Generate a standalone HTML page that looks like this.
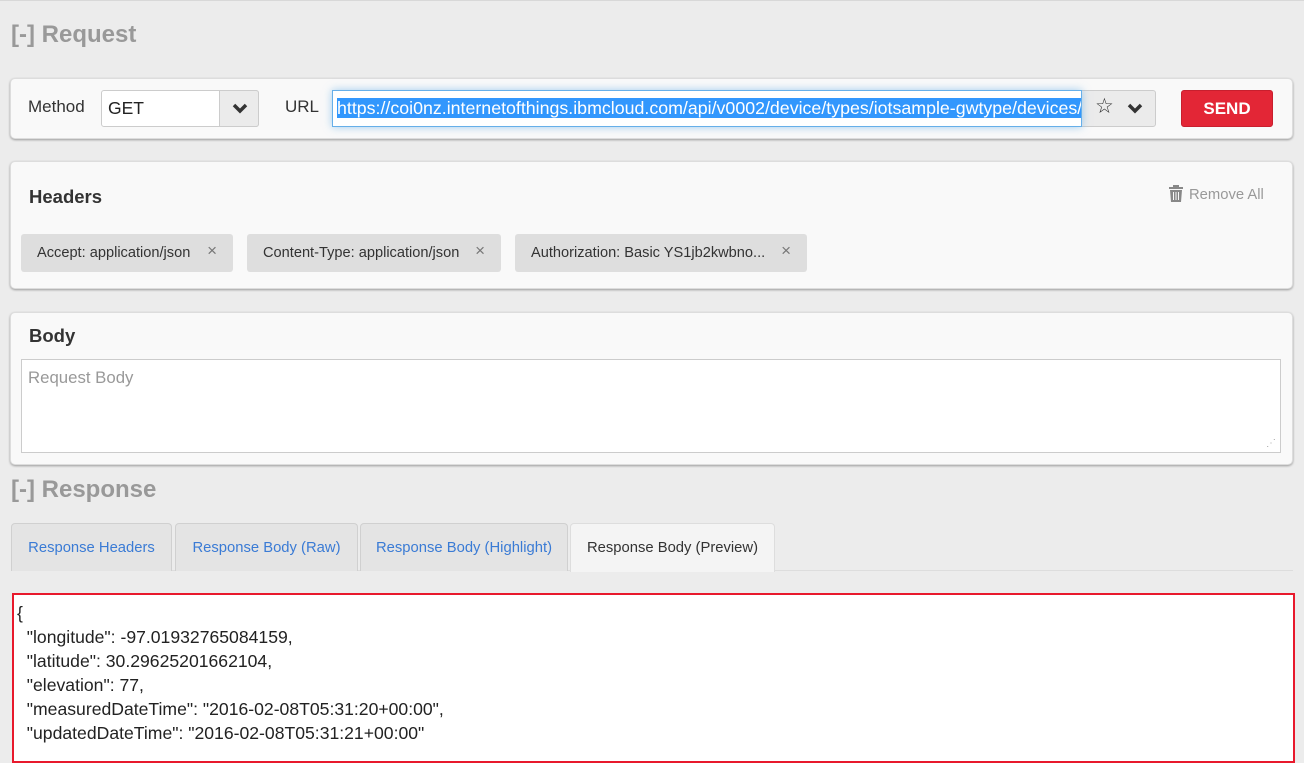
<!DOCTYPE html>
<html><head><style>
*{box-sizing:border-box;margin:0;padding:0}
body{width:1304px;height:750px;background:#ececec;font-family:"Liberation Sans",Arial,sans-serif;position:relative;overflow:hidden;border-top:1px solid #d8d8d8}
.a{position:absolute}
.panel{position:absolute;left:10px;width:1283px;background:#f9f9f9;border-radius:5px;box-shadow:0 1px 2px rgba(0,0,0,.35);border:1px solid #ddd}
.h2{font-size:24px;font-weight:bold;color:#999}
.lbl{font-size:17px;color:#333}
.chip{position:absolute;top:233px;height:38px;background:#dedede;border-radius:3px;font-size:14.6px;color:#333;line-height:38px;padding-left:16px}
.chip .x{position:absolute;right:16px;top:-2px;color:#777;font-size:17px}
.tab{position:absolute;top:522px;height:48px;background:#e4e4e4;border:1px solid #d0d0d0;border-bottom:none;border-radius:4px 4px 0 0;font-size:14.8px;color:#3a7bd5;line-height:48px;text-align:center}
.json{font-size:17.6px;color:#222;line-height:24px}
</style></head><body>
<div class="a h2" style="left:11px;top:20px">[-] Request</div>

<div class="panel" style="top:77px;height:61px"></div>
<div class="a lbl" style="left:28px;top:96px">Method</div>
<div class="a" style="left:101px;top:89px;width:158px;height:37px;border:1px solid #ccc;border-radius:3px;background:#fff"></div>
<div class="a" style="left:219px;top:89px;width:40px;height:37px;border:1px solid #ccc;border-radius:0 3px 3px 0;background:#ebebeb"></div>
<svg class="a" style="left:232px;top:101px" width="16" height="12" viewBox="0 0 16 12"><path d="M2 3 L8 9 L14 3" stroke="#333" stroke-width="3.5" fill="none"/></svg>
<div class="a" style="left:108px;top:97px;font-size:17.5px;color:#222">GET</div>
<div class="a lbl" style="left:285px;top:96px">URL</div>
<div class="a" style="left:1078px;top:89px;width:78px;height:37px;border:1px solid #ccc;border-radius:0 3px 3px 0;background:#ebebeb"></div>
<div class="a" style="left:1095px;top:93px;font-size:21px;color:#333;font-family:'DejaVu Sans',sans-serif">☆</div>
<svg class="a" style="left:1127px;top:101px" width="16" height="12" viewBox="0 0 16 12"><path d="M2 3 L8 9 L14 3" stroke="#333" stroke-width="3.5" fill="none"/></svg>
<div class="a" style="left:332px;top:89px;width:750px;height:37px;border:1px solid #66afe9;background:#fff;box-shadow:0 0 8px rgba(102,175,233,.6);overflow:hidden;white-space:nowrap;padding:7px 0 0 4px"><span style="background:#3297fd;color:#fff;font-size:17.8px">https://coi0nz.internetofthings.ibmcloud.com/api/v0002/device/types/iotsample-gwtype/devices/</span></div>
<div class="a" style="left:1181px;top:89px;width:92px;height:37px;background:#e32636;border:1px solid #c81f2e;border-radius:3px;color:#fff;font-weight:bold;font-size:17px;text-align:center;line-height:35px">SEND</div>

<div class="panel" style="top:160px;height:128px"></div>
<div class="a" style="left:29px;top:185px;font-size:18.5px;font-weight:bold;color:#333">Headers</div>
<svg class="a" style="left:1169px;top:184px" width="14" height="17" viewBox="0 0 14 17"><rect x="0" y="2" width="14" height="2" fill="#888"/><rect x="4" y="0" width="6" height="3" fill="#888"/><path d="M1 5h12l-1 12H2z" fill="#888"/><path d="M4.5 7v8M7 7v8M9.5 7v8" stroke="#f9f9f9" stroke-width="1"/></svg>
<div class="a" style="left:1189px;top:186px;font-size:14.8px;color:#999">Remove All</div>
<div class="chip" style="left:21px;width:212px">Accept: application/json<span class="x">×</span></div>
<div class="chip" style="left:247px;width:254px">Content-Type: application/json<span class="x">×</span></div>
<div class="chip" style="left:515px;width:292px">Authorization: Basic YS1jb2kwbno...<span class="x">×</span></div>

<div class="panel" style="top:311px;height:153px"></div>
<div class="a" style="left:29px;top:324px;font-size:18.5px;font-weight:bold;color:#333">Body</div>
<div class="a" style="left:21px;top:358px;width:1260px;height:94px;background:#fff;border:1px solid #ccc"></div>
<div class="a" style="left:28px;top:367px;font-size:16.8px;color:#999">Request Body</div>
<div class="a" style="left:1266px;top:437px;color:#aaa;font-size:10px">⋰</div>

<div class="a h2" style="left:11px;top:475px">[-] Response</div>
<div class="a" style="left:11px;top:569px;width:1282px;height:1px;background:#ddd"></div>
<div class="tab" style="left:11px;width:161px">Response Headers</div>
<div class="tab" style="left:175px;width:183px">Response Body (Raw)</div>
<div class="tab" style="left:360px;width:208px">Response Body (Highlight)</div>
<div class="tab" style="left:570px;width:205px;height:49px;background:#f4f4f4;color:#333;border-color:#ddd">Response Body (Preview)</div>

<div class="a" style="left:12px;top:592px;width:1283px;height:170px;background:#fff;border:2px solid #e8192c"></div>
<div class="a json" style="left:17px;top:600px;white-space:pre">{
  "longitude": -97.01932765084159,
  "latitude": 30.29625201662104,
  "elevation": 77,
  "measuredDateTime": "2016-02-08T05:31:20+00:00",
  "updatedDateTime": "2016-02-08T05:31:21+00:00"</div>
</body></html>
